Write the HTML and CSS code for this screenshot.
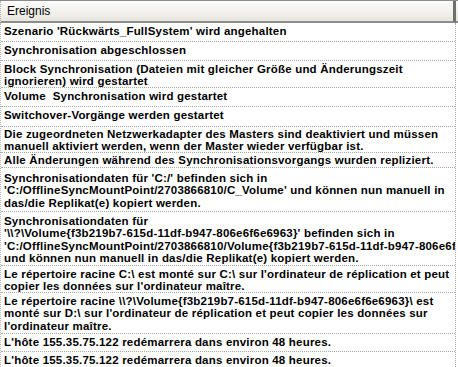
FILE: index.html
```html
<!DOCTYPE html>
<html lang="de">
<head>
    <meta charset="UTF-8">
    <title>Ereignisse</title>
    <link rel="stylesheet" href="styles.css">
</head>
<body>
    <div class="grid">
        <div class="grid-header">
            <div class="col-head">Ereignis</div>
            <div class="col-next"></div>
        </div>
        <div class="grid-body">
            <div class="rows">
                <div class="row h19">Szenario 'Rückwärts_FullSystem' wird angehalten</div>
                <div class="row h19">Synchronisation abgeschlossen</div>
                <div class="row h27">Block Synchronisation (Dateien mit gleicher Größe und Änderungszeit<br>ignorieren) wird gestartet</div>
                <div class="row h19">Volume&nbsp; Synchronisation wird gestartet</div>
                <div class="row h20">Switchover-Vorgänge werden gestartet</div>
                <div class="row h26">Die zugeordneten Netzwerkadapter des Masters sind deaktiviert und müssen<br>manuell aktiviert werden, wenn der Master wieder verfügbar ist.</div>
                <div class="row h15">Alle Änderungen während des Synchronisationsvorgangs wurden repliziert.</div>
                <div class="row h44">Synchronisationdaten für 'C:/' befinden sich in<br>'C:/OfflineSyncMountPoint/2703866810/C_Volume' und können nun manuell in<br>das/die Replikat(e) kopiert werden.</div>
                <div class="row h54">Synchronisationdaten für<br>'\\?\Volume{f3b219b7-615d-11df-b947-806e6f6e6963}' befinden sich in<br>'C:/OfflineSyncMountPoint/2703866810/Volume{f3b219b7-615d-11df-b947-806e6f6e6963}'<br>und können nun manuell in das/die Replikat(e) kopiert werden.</div>
                <div class="row h27">Le répertoire racine C:\ est monté sur C:\ sur l'ordinateur de réplication et peut<br>copier les données sur l'ordinateur maître.</div>
                <div class="row h41">Le répertoire racine \\?\Volume{f3b219b7-615d-11df-b947-806e6f6e6963}\ est<br>monté sur D:\ sur l'ordinateur de réplication et peut copier les données sur<br>l'ordinateur maître.</div>
                <div class="row h18">L'hôte 155.35.75.122 redémarrera dans environ 48 heures.</div>
                <div class="row h19">L'hôte 155.35.75.122 redémarrera dans environ 48 heures.</div>
            </div>
            <div class="col-next-body"></div>
        </div>
    </div>
</body>
</html>
```

FILE: styles.css
```css
* {
    margin: 0;
    padding: 0;
    box-sizing: border-box;
}

body {
    width: 458px;
    height: 367px;
    overflow: hidden;
    background-color: #fff;
    font-family: "Liberation Sans", Arial, sans-serif;
}

.grid {
    width: 458px;
}

.grid-header {
    display: flex;
    height: 23px;
    border-top: 1px solid #8a8a8a;
}

.col-head {
    width: 455px;
    padding: 3px 6px 0;
    font-size: 12px;
    color: #000;
    background: linear-gradient(#fcfcfb, #f1f0ec 60%, #e6e5de);
    border-bottom: 2px solid #8c8c88;
    border-right: 2px solid #6f706c;
    border-left: 1px dotted #b0b0b0;
}

.col-next {
    flex: 1;
    background: linear-gradient(#fcfcfb, #e6e5de);
    border-left: 1px solid #6f706c;
    border-bottom: 2px solid #8c8c88;
}

.grid-body {
    display: flex;
}

.rows {
    width: 456px;
    border-right: 1px dotted #a8a8a8;
    border-left: 1px dotted #b8b8b8;
}

.col-next-body {
    flex: 1;
}

.row {
    padding: 2px 0 0 3px;
    font-size: 11.5px;
    font-weight: bold;
    letter-spacing: 0.2px;
    line-height: 12.3px;
    color: #000;
    white-space: nowrap;
    overflow: hidden;
    border-bottom: 1px dotted #a8a8a8;
}

.h15 { height: 15px; padding-top: 1px; }
.h18 { height: 18px; }
.h19 { height: 19px; }
.h20 { height: 20px; }
.h26 { height: 26px; padding-top: 1px; }
.h27 { height: 27px; }
.h41 { height: 41px; }
.h44 { height: 44px; padding-top: 4px; }
.h54 { height: 54px; padding-top: 3px; }
```
